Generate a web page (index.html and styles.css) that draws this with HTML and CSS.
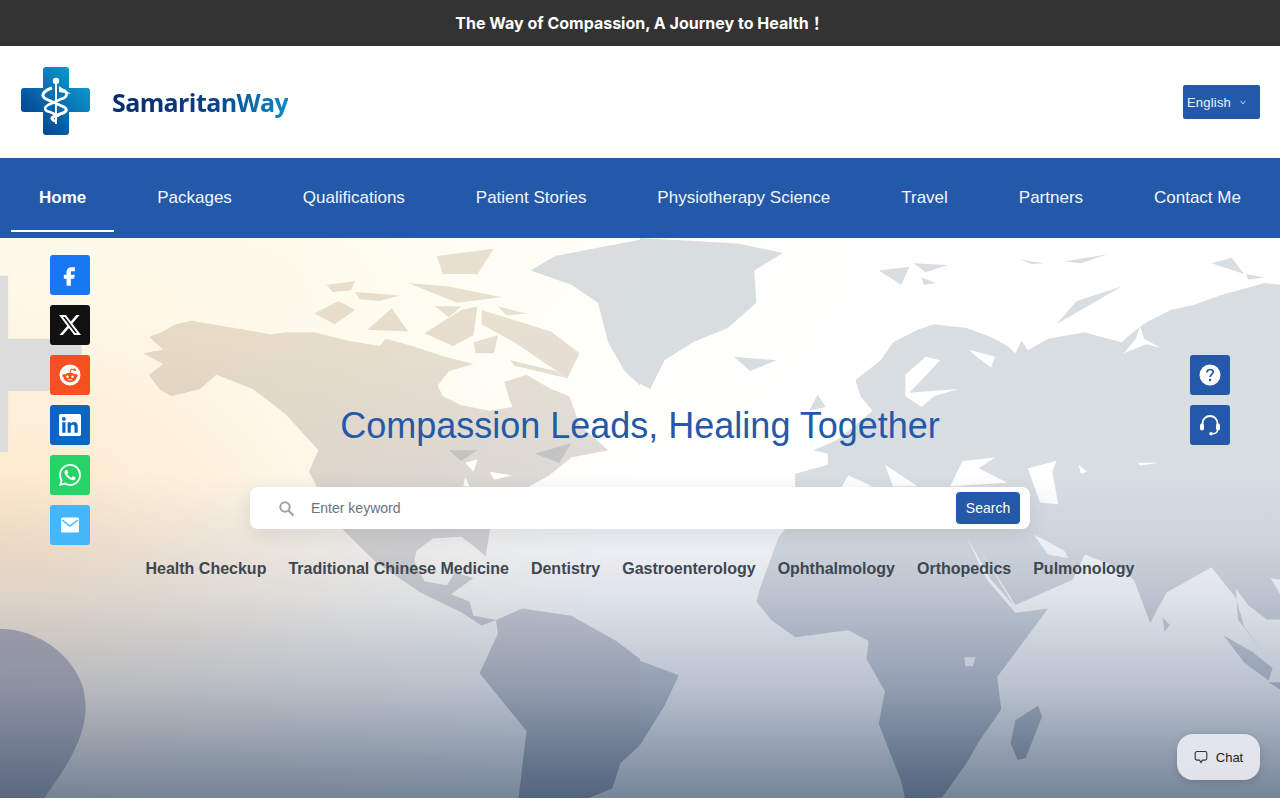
FILE: index.html
```html
<!DOCTYPE html>
<html lang="en">
<head>
    <meta charset="UTF-8">
    <meta name="viewport" content="width=device-width, initial-scale=1.0">
    <title>SamaritanWay</title>
    <link rel="stylesheet" href="styles.css">
</head>
<body>
    <div class="topbar">The Way of Compassion, A Journey to Health<span class="bang">！</span></div>

    <div class="header">
        <a class="logo" href="#">
            <svg class="logo-mark" width="69" height="68" viewBox="0 0 69 68">
                <defs>
                    <linearGradient id="crossfill" x1="0" y1="1" x2="1" y2="0">
                        <stop offset="0" stop-color="#00337f"/>
                        <stop offset="0.5" stop-color="#0a6db0"/>
                        <stop offset="1" stop-color="#0badd8"/>
                    </linearGradient>
                </defs>
                <path d="M25 0h20a3 3 0 0 1 3 3V21h18a3 3 0 0 1 3 3v18a3 3 0 0 1-3 3H48v20a3 3 0 0 1-3 3H25a3 3 0 0 1-3-3V45H3a3 3 0 0 1-3-3V24a3 3 0 0 1 3-3h19V3a3 3 0 0 1 3-3z" fill="url(#crossfill)"/>
                <circle cx="35" cy="14" r="3.200" fill="#fff"/>
                <path d="M35 16V57" stroke="#fff" stroke-width="2" fill="none"/>
                <path d="M38 19L50 27L38 25z" fill="#fff"/>
                <path d="M31 21C22 24 19 29 25 32L43 40C48 43 44 46 39 47L32 50C30 51 31 53 34 54" stroke="#fff" stroke-width="3" fill="none"/>
                <path d="M43 23C48 27 45 31 40 32L27 38C22 41 24 44 29 45L38 49" stroke="#fff" stroke-width="2.600" fill="none"/>
            </svg>
            <span class="logo-text">SamaritanWay</span>
        </a>
        <div class="lang">
            <span>English</span>
            <svg width="6" height="5" viewBox="0 0 6 5"><path d="M.7.8L3 4 5.300.8" stroke="#b9c9e4" stroke-width="1" fill="none"/></svg>
        </div>
    </div>

    <div class="nav">
        <a class="on" href="#">Home</a>
        <a href="#">Packages</a>
        <a href="#">Qualifications</a>
        <a href="#">Patient Stories</a>
        <a href="#">Physiotherapy Science</a>
        <a href="#">Travel</a>
        <a href="#">Partners</a>
        <a href="#">Contact Me</a>
    </div>

    <div class="hero">
        <!-- world map behind the hero, drawn on a 2.45 x 2.78 grid -->
        <svg class="map" width="1280" height="560" viewBox="0 0 1280 560">
            <defs>
                <linearGradient id="landwest" gradientUnits="userSpaceOnUse" x1="0" y1="200" x2="0" y2="1562">
                    <stop offset="0" stop-color="#b39a78" stop-opacity=".3"/>
                    <stop offset="0.5" stop-color="#8f8f98" stop-opacity=".36"/>
                    <stop offset="1" stop-color="#203050" stop-opacity=".5"/>
                </linearGradient>
                <linearGradient id="landeast" gradientUnits="userSpaceOnUse" x1="0" y1="0" x2="0" y2="1562">
                    <stop offset="0" stop-color="#7f8fa0" stop-opacity=".3"/>
                    <stop offset="0.55" stop-color="#7f8fa0" stop-opacity=".3"/>
                    <stop offset="1" stop-color="#203050" stop-opacity=".5"/>
                </linearGradient>
            </defs>
            <g transform="scale(.40816 .35979)">
                <path d="M0 105H20V280H200V425H20V595H0z" fill="#dcdcdc"/>
                <path d="M0 1087C100 1085 210 1180 210 1300C210 1400 150 1490 105 1562H0z" fill="#6f7088" fill-opacity=".6"/>
            </g>
            <g transform="scale(.40816 .35979)" fill="url(#landwest)">
                <path d="M365 275L395 262 430 240 470 230 520 240 600 255 665 268 700 262 770 262 850 285 930 300 945 280 1010 300 1090 330 1160 350 1100 370 1072 410 1085 440 1130 465 1200 480 1255 470 1235 400 1290 380 1350 420 1395 440 1420 520 1490 590 1400 610 1345 660 1290 695 1200 810 1190 885 1165 860 1130 830 1060 835 1020 870 1015 900 1040 955 1095 965 1115 930 1160 945 1105 990 1150 1010 1160 1050 1215 1062 1180 1078 1130 1040 1030 985 920 900 840 810 780 700 757 650 780 590 700 490 620 420 530 380 490 420 420 440 390 420 365 380 400 350 350 320 400 310z"/>
                <path d="M1215 1062L1280 1030 1400 1050 1510 1120 1568 1170 1568 1410 1520 1460 1500 1530 1430 1562 1270 1562 1290 1370 1175 1210 1220 1100z"/>
                <path d="M800 130L870 120 860 145 815 150zM770 210L830 175 870 200 820 240zM870 150L980 160 930 175 880 170zM960 195L1000 260 900 255zM1070 50L1210 30 1170 100 1085 100zM1000 125L1100 135 1230 165 1120 180zM1065 190L1130 190 1100 220zM1130 200L1170 190 1160 270 1110 300 1040 265zM1180 200L1350 260 1420 320 1390 390 1260 290 1180 240zM1250 340L1360 370 1390 390 1260 355zM1160 290L1220 270 1210 320 1165 320zM1220 190L1290 210 1240 215z"/>
            </g>
            <g transform="scale(.40816 .35979)" fill="url(#landeast)">
                <path d="M1300 90L1360 50 1568 5V410L1530 370 1490 290 1465 180 1400 130zM1100 590L1170 590 1130 620zM1310 600L1400 570 1370 625z"/>
            </g>
            <g transform="translate(640 0) scale(.40816 .35979)" fill="url(#landeast)">
                <path d="M0 1175L95 1215 60 1300 0 1410zM0 0L240 15 350 42 280 90 285 180 215 250 130 290 60 340 25 420 0 405z"/>
                <path d="M380 690L380 655 460 630 460 600 425 590 485 560 570 480 540 440 528 395 590 340 620 290 680 255 720 240 800 250 860 275 900 300 920 320 935 285 950 312 1000 280 1090 262 1130 275 1180 290 1210 260 1240 235 1300 200 1360 185 1420 160 1530 125 1568 130 1568 950 1545 945 1568 990 1568 1060 1535 1060 1490 1020 1460 975 1465 1060 1530 1155 1480 1080 1460 1000 1400 915 1290 985 1250 1070 1210 950 1180 920 1090 880 1060 950 920 1020 830 860 790 790 370 790z"/>
                <path d="M370 790L340 830 295 970 285 1010 320 1060 380 1110 510 1090 560 1120 555 1170 600 1260 585 1350 640 1510 650 1562 740 1555 800 1460 830 1400 885 1310 875 1220 1000 1030 920 1030 830 860 790 790z"/>
                <path d="M230 330L335 340 270 370zM415 480L435 435 455 470zM585 90L660 80 640 130zM670 70L755 75 700 95zM690 110L725 125 695 130zM1020 240L1180 135 1070 175zM1400 70L1450 55 1480 100zM1485 100L1530 110 1490 115zM930 60L990 70 960 72zM1040 65L1145 45 1080 70zM1280 1055L1298 1075 1285 1095zM1430 1105L1500 1150 1550 1195 1540 1230 1480 1180zM1540 1235L1568 1235 1568 1255zM975 1300L985 1330 945 1445 925 1450 908 1405 920 1340z"/>
            </g>
            <!-- seas and lakes -->
            <g fill="#fff" transform="translate(640 0) scale(.40816 .35979)">
                <path d="M700 330L735 340 690 395 660 430 780 420 720 440 690 470 650 440 650 380z"/>
                <path d="M805 310L870 330 860 360 830 335z"/>
                <path d="M790 620L870 610 830 640 900 680 760 690z"/>
                <path d="M950 640L1020 620 1010 650 1025 740 980 735z"/>
                <path d="M600 630L680 690 620 690zM510 660L570 690 490 700z"/>
                <path d="M1075 630L1095 650 1080 655zM1220 625L1270 625 1225 632z"/>
                <path d="M1185 320L1240 295 1275 305 1235 280 1225 245 1215 280z"/>
                <path d="M800 830L860 950 915 1020 1000 1030 920 1042 850 950z"/>
                <path d="M965 825L1000 880 1050 890 1040 870 985 835z"/>
                <path d="M795 1165L822 1165 815 1190 797 1190z"/>
            </g>
            <g fill="#fff" transform="scale(.40816 .35979)">
                <path d="M1140 625L1170 615 1160 650zM1200 650L1255 660 1210 672zM1140 665L1150 690 1135 690z"/>
            </g>
        </svg>
        <div class="shade"></div>

        <div class="share">
            <a class="fb" href="#">
                <svg width="26" height="26" viewBox="0 0 24 24"><path d="M13.500 8.500h3V4.800h-3.200c-2.800 0-4.500 1.800-4.500 4.500v2.400H6.300v3.700h2.500V22h4v-6.600h3l.6-3.700h-3.600V9.600c0-.8.200-1.100.7-1.100z" fill="#fff"/></svg>
            </a>
            <a class="tw" href="#">
                <svg width="22" height="22" viewBox="0 0 24 24"><path d="M18.901 1.153h3.68l-8.04 9.19L24 22.846h-7.406l-5.8-7.584-6.638 7.584H.474l8.6-9.83L0 1.154h7.594l5.243 6.932ZM17.610 20.644h2.039L6.486 3.240H4.298Z" fill="#fff"/></svg>
            </a>
            <a class="rd" href="#">
                <svg width="24" height="24" viewBox="0 0 24 24">
                    <circle cx="12" cy="12" r="10.500" fill="#fff"/>
                    <ellipse cx="12" cy="14.500" rx="6.500" ry="4.700" fill="#f4511e"/>
                    <circle cx="5.800" cy="12.500" r="1.500" fill="#f4511e"/>
                    <circle cx="18.200" cy="12.500" r="1.500" fill="#f4511e"/>
                    <path d="M12 10l1-4 3 .7" stroke="#f4511e" stroke-width="1" fill="none"/>
                    <circle cx="16.700" cy="6.800" r="1.300" fill="#f4511e"/>
                    <circle cx="9.500" cy="13.800" r="1.200" fill="#fff"/>
                    <circle cx="14.500" cy="13.800" r="1.200" fill="#fff"/>
                    <path d="M9.800 16.700h4.400" stroke="#fff" stroke-width="1" fill="none"/>
                </svg>
            </a>
            <a class="in" href="#">
                <svg width="22" height="22" viewBox="0 0 24 24"><path d="M20.447 20.452h-3.554v-5.569c0-1.328-.027-3.037-1.852-3.037-1.853 0-2.136 1.445-2.136 2.939v5.667H9.351V9h3.414v1.561h.046c.477-.9 1.637-1.850 3.370-1.850 3.601 0 4.267 2.370 4.267 5.455v6.286zM5.337 7.433c-1.144 0-2.063-.926-2.063-2.065 0-1.138.920-2.063 2.063-2.063 1.140 0 2.064.925 2.064 2.063 0 1.139-.925 2.065-2.064 2.065zm1.782 13.019H3.555V9h3.564v11.452zM22.225 0H1.771C.792 0 0 .774 0 1.729v20.542C0 23.227.792 24 1.771 24h20.451C23.200 24 24 23.227 24 22.271V1.729C24 .774 23.200 0 22.222 0h.003z" fill="#fff"/></svg>
            </a>
            <a class="wa" href="#">
                <svg width="22" height="22" viewBox="0 0 24 24"><path d="M17.472 14.382c-.297-.149-1.758-.867-2.030-.967-.273-.099-.471-.148-.670.150-.197.297-.767.966-.940 1.164-.173.199-.347.223-.644.075-.297-.150-1.255-.463-2.390-1.475-.883-.788-1.480-1.761-1.653-2.059-.173-.297-.018-.458.130-.606.134-.133.298-.347.446-.520.149-.174.198-.298.298-.497.099-.198.050-.371-.025-.520-.075-.149-.669-1.612-.916-2.207-.242-.579-.487-.500-.669-.510-.173-.008-.371-.010-.570-.010-.198 0-.520.074-.792.372-.272.297-1.040 1.016-1.040 2.479 0 1.462 1.065 2.875 1.213 3.074.149.198 2.096 3.200 5.077 4.487.709.306 1.262.489 1.694.625.712.227 1.360.195 1.871.118.571-.085 1.758-.719 2.006-1.413.248-.694.248-1.289.173-1.413-.074-.124-.272-.198-.570-.347m-5.421 7.403h-.004a9.870 9.870 0 01-5.031-1.378l-.361-.214-3.741.982.998-3.648-.235-.374a9.860 9.860 0 01-1.510-5.260c.001-5.450 4.436-9.884 9.888-9.884 2.640 0 5.122 1.030 6.988 2.898a9.825 9.825 0 012.893 6.994c-.003 5.450-4.437 9.884-9.885 9.884m8.413-18.297A11.815 11.815 0 0012.050 0C5.495 0 .160 5.335.157 11.892c0 2.096.547 4.142 1.588 5.945L.057 24l6.305-1.654a11.882 11.882 0 005.683 1.448h.005c6.554 0 11.890-5.335 11.893-11.893a11.821 11.821 0 00-3.480-8.413z" fill="#fff"/></svg>
            </a>
            <a class="ml" href="#">
                <svg width="20" height="16" viewBox="0 0 20 16">
                    <rect x="1" y="0.500" width="18" height="15" rx="1.500" fill="#fff"/>
                    <path d="M2 3l8 6 8-6" stroke="#46b6fa" stroke-width="1.500" fill="none"/>
                </svg>
            </a>
        </div>

        <div class="help">
            <a href="#">
                <svg width="22" height="22" viewBox="0 0 22 22">
                    <circle cx="11" cy="11" r="10.500" fill="#fff"/>
                    <path d="M8 8.500C8 6.500 9.500 5.500 11.200 5.500C13 5.500 14.200 6.600 14.200 8.100C14.200 10 11.300 10.500 11.200 13" stroke="#2359a8" stroke-width="1.700" fill="none"/>
                    <circle cx="11.100" cy="16" r="1.200" fill="#2359a8"/>
                </svg>
            </a>
            <a href="#">
                <svg width="22" height="22" viewBox="0 0 22 22">
                    <path d="M3.500 11V9.500a7.500 7.500 0 0 1 15 0V11" stroke="#fff" stroke-width="1.800" fill="none"/>
                    <rect x="1" y="9.500" width="4" height="7" rx="2" fill="#fff"/>
                    <rect x="17" y="9.500" width="4" height="7" rx="2" fill="#fff"/>
                    <path d="M18.500 16c0 2.500-2.500 3.800-5 3.800" stroke="#fff" stroke-width="1.500" fill="none"/>
                    <circle cx="12" cy="19.800" r="1.800" fill="#fff"/>
                </svg>
            </a>
        </div>

        <div class="hero-body">
            <h1>Compassion Leads, Healing Together</h1>
            <div class="search">
                <svg width="17" height="17" viewBox="0 0 17 17">
                    <circle cx="7" cy="7" r="4.700" stroke="#9ca3af" stroke-width="2" fill="none"/>
                    <path d="M10.500 10.500L15.500 15.500" stroke="#9ca3af" stroke-width="2.200"/>
                </svg>
                <span class="search-text">Enter keyword</span>
                <button type="button">Search</button>
            </div>
            <div class="tags">
                <a href="#">Health Checkup</a>
                <a href="#">Traditional Chinese Medicine</a>
                <a href="#">Dentistry</a>
                <a href="#">Gastroenterology</a>
                <a href="#">Ophthalmology</a>
                <a href="#">Orthopedics</a>
                <a href="#">Pulmonology</a>
            </div>
        </div>

        <div class="chat">
            <svg width="14" height="14" viewBox="0 0 14 14"><path d="M3 1.500h8a1.800 1.800 0 0 1 1.800 1.800v5a1.800 1.800 0 0 1-1.800 1.800H8.500L7 12.500 5.500 10.100H3a1.800 1.800 0 0 1-1.800-1.800v-5A1.800 1.800 0 0 1 3 1.500z" stroke="#333" stroke-width="1.100" fill="none"/></svg>
            <span>Chat</span>
        </div>
    </div>
</body>
</html>
```

FILE: styles.css
```css
* {
    box-sizing: border-box;
}

html, body {
    height: 800px;
    overflow: hidden;
}

body {
    margin: 0;
    background-color: white;
    font-family: "Liberation Sans", Arial, sans-serif;
}

a {
    text-decoration: none;
    color: inherit;
}

div.topbar {
    height: 46px;
    line-height: 46px;
    background-color: #333333;
    color: white;
    text-align: center;
    font-family: Inter, "Noto Sans CJK TC", sans-serif;
    font-size: 16px;
    font-weight: 700;
}

div.topbar span.bang {
    font-family: "Noto Sans CJK TC", sans-serif;
    line-height: 0;
}

div.header {
    height: 112px;
    padding: 0 20px 0 21px;
    display: flex;
    align-items: center;
    justify-content: space-between;
}

a.logo {
    display: flex;
    align-items: center;
    gap: 22px;
}

a.logo svg.logo-mark {
    margin-top: -2px;
}

a.logo span.logo-text {
    font-family: "Open Sans", sans-serif;
    font-size: 25px;
    font-weight: 700;
    letter-spacing: -.6px;
    background: linear-gradient(90deg, #0b2a6b 0%, #0b3f84 55%, #0a8cc6 100%);
    -webkit-background-clip: text;
    background-clip: text;
    color: transparent;
}

div.lang {
    width: 77px;
    height: 34px;
    padding: 0 4px;
    display: flex;
    align-items: center;
    gap: 9px;
    background-color: #2359a8;
    border-radius: 2px;
    color: #eef3fa;
    font-size: 13px;
    letter-spacing: .2px;
}

div.nav {
    height: 80px;
    padding: 0 11px;
    display: flex;
    justify-content: space-between;
    background-color: #2359a8;
}

div.nav a {
    position: relative;
    padding: 0 28px;
    display: flex;
    align-items: center;
    color: #f2f5fb;
    font-size: 17px;
}

div.nav a.on {
    color: white;
    font-weight: 700;
}

div.nav a.on::after {
    content: "";
    position: absolute;
    left: 0;
    right: 0;
    bottom: 6px;
    height: 2px;
    background-color: white;
}

div.hero {
    position: relative;
    height: 560px;
    overflow: hidden;
    background:
        radial-gradient(ellipse 600px 420px at 0% 55%, rgba(253, 224, 188, .85), rgba(253, 240, 215, .4) 60%, rgba(255, 250, 235, 0) 100%),
        radial-gradient(ellipse 700px 320px at 15% 0%, rgba(255, 252, 232, .8), rgba(255, 252, 232, 0) 100%),
        white;
}

svg.map {
    position: absolute;
    left: 0;
    top: 0;
}

div.shade {
    position: absolute;
    inset: 0;
    background: linear-gradient(180deg, rgba(150, 165, 185, 0) 42%, rgba(140, 155, 180, .28) 64%, rgba(110, 128, 155, .48) 80%, rgba(53, 75, 105, .68) 100%);
}

div.share, div.help {
    position: absolute;
    display: flex;
    flex-direction: column;
    gap: 10px;
}

div.share {
    left: 50px;
    top: 17px;
}

div.help {
    left: 1190px;
    top: 117px;
}

div.share a, div.help a {
    width: 40px;
    height: 40px;
    display: flex;
    align-items: center;
    justify-content: center;
    border-radius: 3px;
}

div.help a {
    background-color: #2359a8;
}

a.fb { background-color: #1877f2; }
a.tw { background-color: #111111; }
a.rd { background-color: #f4511e; }
a.in { background-color: #0a66c2; }
a.wa { background-color: #25d366; }
a.ml { background-color: #46b6fa; }

div.hero-body {
    position: relative;
    padding-top: 167px;
    display: flex;
    flex-direction: column;
    align-items: center;
}

div.hero-body h1 {
    margin: 0;
    color: #2359a8;
    font-size: 36px;
    line-height: 42px;
    font-weight: 400;
}

div.search {
    width: 780px;
    height: 42px;
    margin-top: 40px;
    padding: 0 10px 0 28px;
    display: flex;
    align-items: center;
    background-color: white;
    border-radius: 8px;
    box-shadow: 0 6px 18px rgba(60, 70, 90, .12);
}

div.search span.search-text {
    flex: 1;
    margin-left: 16px;
    color: #6b7280;
    font-size: 14px;
}

div.search button {
    width: 64px;
    height: 32px;
    padding: 0;
    border: none;
    border-radius: 4px;
    background-color: #2359a8;
    color: white;
    font-family: "Liberation Sans", Arial, sans-serif;
    font-size: 14px;
}

div.tags {
    margin-top: 29px;
    display: flex;
    gap: 22px;
    color: #3f4650;
    font-size: 16px;
    line-height: 22px;
    font-weight: 700;
}

div.chat {
    position: absolute;
    left: 1177px;
    top: 496px;
    width: 83px;
    height: 46px;
    display: flex;
    align-items: center;
    justify-content: center;
    gap: 8px;
    background-color: rgba(232, 234, 240, .92);
    border-radius: 16px;
    box-shadow: 0 2px 8px rgba(0, 0, 0, .15);
    color: #222222;
    font-size: 13px;
}
```
